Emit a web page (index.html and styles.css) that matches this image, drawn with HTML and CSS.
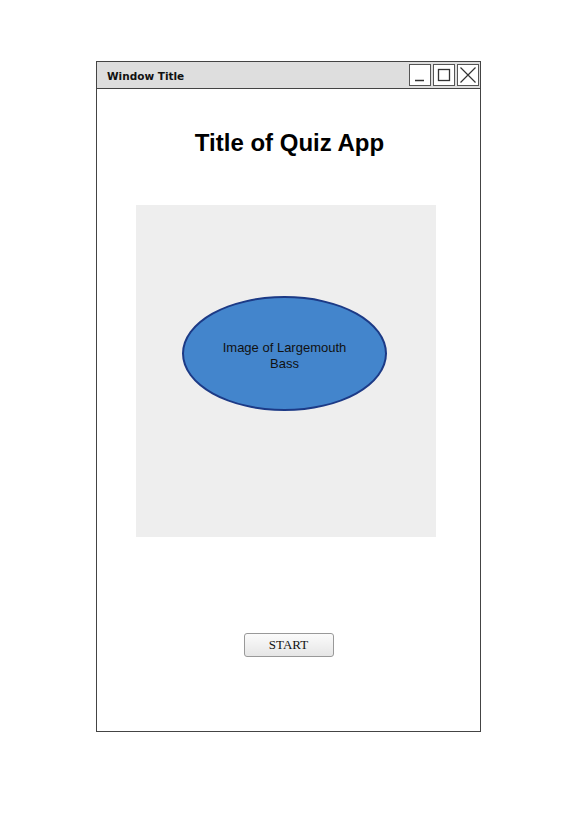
FILE: index.html
```html
<!DOCTYPE html>
<html>
<head>
<meta charset="utf-8">
<link rel="stylesheet" href="styles.css">
</head>
<body>
<div class="window">
  <div class="titlebar">
    <span class="wtitle">Window Title</span>
    <div class="controls">
      <span class="ctl"><svg width="22" height="22" viewBox="0 0 22 22"><line x1="6" y1="16.5" x2="15" y2="16.5" stroke="#333" stroke-width="1.5"/></svg></span>
      <span class="ctl"><svg width="22" height="22" viewBox="0 0 22 22"><rect x="5.5" y="5.5" width="11" height="11" fill="none" stroke="#333" stroke-width="1.3"/></svg></span>
      <span class="ctl"><svg width="22" height="22" viewBox="0 0 22 22"><path d="M3.5 3.5 L18.5 18.5 M18.5 3.5 L3.5 18.5" stroke="#333" stroke-width="1.2"/></svg></span>
    </div>
  </div>
  <div class="content">
    <h1 class="title">Title of Quiz App</h1>
    <div class="panel">
      <div class="ellipse"><span>Image of Largemouth<br>Bass</span></div>
    </div>
    <button class="start">START</button>
  </div>
</div>
</body>
</html>
```
FILE: styles.css
```css
html, body { margin: 0; padding: 0; background: #fff; }
body { width: 569px; height: 838px; }
.window {
  margin: 61px 0 0 96px;
  width: 385px;
  height: 671px;
  box-sizing: border-box;
  border: 1.5px solid #444;
  display: flex;
  flex-direction: column;
}
.titlebar {
  height: 27px;
  box-sizing: border-box;
  background: #dedede;
  border-bottom: 1.5px solid #444;
  display: flex;
  align-items: center;
  justify-content: space-between;
  padding: 0 1px 0 10px;
}
.wtitle {
  font-family: "DejaVu Sans", sans-serif;
  font-weight: bold;
  font-size: 10.5px;
  color: #111;
  margin-top: 1px;
}
.controls { display: flex; gap: 2px; }
.ctl {
  width: 22px; height: 22px;
  box-sizing: border-box;
  border: 1px solid #555;
  background: #fff;
  display: block;
}
.ctl svg { display: block; margin: -1px; }
.content {
  display: flex;
  flex-direction: column;
  align-items: center;
}
.title {
  margin: 40px 0 0 2px;
  font-family: "Liberation Sans", Arial, sans-serif;
  font-weight: bold;
  font-size: 24px;
  line-height: 27px;
  color: #000;
}
.panel {
  align-self: flex-start;
  margin: 49px 0 0 39px;
  width: 300px;
  height: 332px;
  background: #eeeeee;
  padding: 91px 0 0 46px;
  box-sizing: border-box;
}
.ellipse {
  width: 205px;
  height: 115px;
  box-sizing: border-box;
  border-radius: 50%;
  background: #4385cc;
  border: 2px solid #1c3a86;
  display: flex;
  align-items: center;
  justify-content: center;
  text-align: center;
  font-family: "Liberation Sans", Arial, sans-serif;
  font-size: 13px;
  line-height: 16px;
  color: #111;
}
.ellipse span { margin: 5px 0 0 0; }
.start {
  margin-top: 96px;
  width: 90px;
  height: 24px;
  border: 1px solid #999;
  border-radius: 3px;
  background: linear-gradient(#fbfbfb, #e6e6e6);
  font-family: "Liberation Serif", "Times New Roman", serif;
  font-size: 13px;
  color: #111;
  padding: 0;
}
```
